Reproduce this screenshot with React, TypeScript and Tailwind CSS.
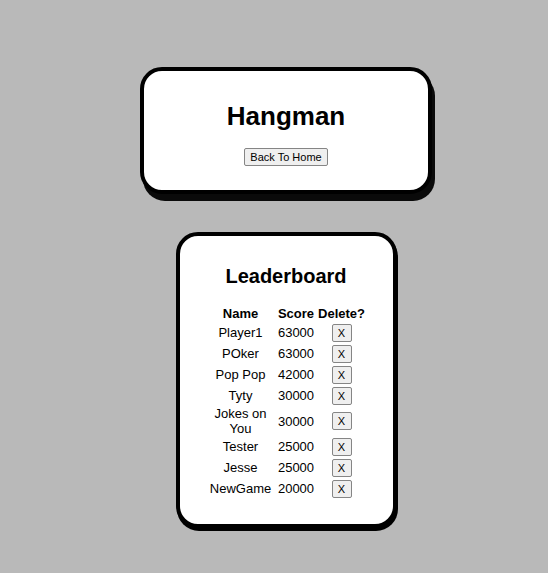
const scores = [
  { name: "Player1", score: 63000 },
  { name: "POker", score: 63000 },
  { name: "Pop Pop", score: 42000 },
  { name: "Tyty", score: 30000 },
  { name: "Jokes on You", score: 30000 },
  { name: "Tester", score: 25000 },
  { name: "Jesse", score: 25000 },
  { name: "NewGame", score: 20000 },
];

const buttonStyle =
  "rounded-[2px] border border-[#858585] bg-[#efefef] text-[11px] leading-4 text-black";

export default function App() {
  return (
    <main className="flex min-h-screen flex-col items-center gap-[38px] bg-[#b9b9b9] pt-[67px] pb-10 pl-6 text-center font-['Liberation_Sans',Arial,sans-serif] text-black">
      <header className="flex w-full max-w-[292px] flex-col items-center gap-4 rounded-[22px] border-4 border-black bg-white px-8 pt-[29px] pb-6 shadow-[3px_7px_0_#0a0a0a]">
        <h1 className="text-[26px] leading-8 font-bold">Hangman</h1>
        <button type="button" className={`${buttonStyle} px-[5px]`}>
          Back To Home
        </button>
      </header>

      <section className="flex w-full max-w-[221px] flex-col items-center gap-[17px] rounded-[22px] border-4 border-black bg-white pt-7 pb-[25px] shadow-[1px_3px_0_#000]">
        <h2 className="text-[20px] leading-6 font-bold">Leaderboard</h2>
        <table className="table-fixed border-collapse text-[13px] leading-[15px]">
          <colgroup>
            <col className="w-[68px]" />
            <col className="w-[43px]" />
            <col className="w-12" />
          </colgroup>
          <thead>
            <tr className="h-[17px]">
              <th>Name</th>
              <th>Score</th>
              <th>Delete?</th>
            </tr>
          </thead>
          <tbody>
            {scores.map(({ name, score }) => (
              <tr key={name} className="h-[21px]">
                <td>{name}</td>
                <td>{score}</td>
                <td>
                  <button
                    type="button"
                    aria-label={`Delete ${name}`}
                    className={`${buttonStyle} block mx-auto w-5`}
                  >
                    X
                  </button>
                </td>
              </tr>
            ))}
          </tbody>
        </table>
      </section>
    </main>
  );
}
